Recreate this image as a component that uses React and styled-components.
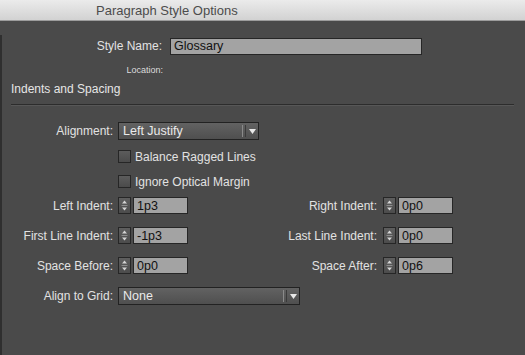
import React from 'react'
import styled, { createGlobalStyle } from 'styled-components'

const Global = createGlobalStyle`
    html, body {
        margin: 0;
        padding: 0;
        background: #4a4a4a;
    }
    body {
        font-family: "Liberation Sans", Arial, sans-serif;
        font-size: 12px;
    }
`

const Dialog = styled.div`
    width: 525px;
    height: 355px;
    display: flex;
    flex-direction: column;
    background: #4a4a4a;
    overflow: hidden;
`

const TitleBar = styled.div`
    height: 20px;
    flex: none;
    display: flex;
    align-items: center;
    padding-left: 96px;
    background: linear-gradient(#ebebeb, #d2d2d2);
    border-bottom: 1px solid #9c9c9c;
    color: #4c4c4c;
    font-size: 13px;
`

const Body = styled.div`
    flex: 1;
    display: flex;
`

// darker edge of the neighbouring panel on the left
const EdgeStrip = styled.div`
    width: 2px;
    margin-top: 14px;
    background: #2f2f2f;
    flex: none;
`

const Content = styled.div`
    flex: 1;
    display: flex;
    flex-direction: column;
    color: #e2e2e2;
`

const NameRow = styled.div`
    display: flex;
    align-items: center;
    gap: 8px;
    margin-top: 17px;
    height: 16px;
`

const NameLabel = styled.div`
    width: 160px;
    text-align: right;
`

const TextField = styled.div`
    box-sizing: border-box;
    width: ${p => p.$width}px;
    height: ${p => p.$height || 17}px;
    background: #a3a3a3;
    border: 1px solid #262626;
    color: #111;
    display: flex;
    align-items: center;
    padding-left: 3px;
    font-size: 12.5px;
`

const Location = styled.div`
    width: 161px;
    text-align: right;
    margin-top: 11px;
    font-size: 9px;
    line-height: 11px;
    color: #dcdcdc;
`

const SectionTitle = styled.div`
    margin: 6px 0 0 9px;
    line-height: 14px;
    color: #e6e6e6;
`

const Separator = styled.div`
    margin: 8px 11px 0 9px;
    border-top: 1px solid #2c2c2c;
    border-bottom: 1px solid #575757;
`

const FieldRow = styled.div`
    display: flex;
    align-items: center;
    gap: 5px;
    margin-top: ${p => p.$top}px;
`

const Label = styled.div`
    width: 111px;
    text-align: right;
    white-space: nowrap;
`

const Select = styled.div`
    box-sizing: border-box;
    width: ${p => p.$width}px;
    height: 18px;
    border: 1px solid #222;
    background: linear-gradient(#626262, #4f4f4f);
    display: flex;
    align-items: center;
    padding-left: 4px;
    color: #eaeaea;
    font-size: 12.5px;
`

const SelectText = styled.span`
    flex: 1;
`

const ArrowPart = styled.div`
    display: flex;
    align-items: center;
    gap: 3px;
    padding-right: 2px;
    height: 100%;
`

const Divider = styled.div`
    width: 2px;
    height: 12px;
    border-left: 1px solid #8a8a8a;
    border-right: 1px solid #3a3a3a;
`

const CheckRow = styled.div`
    display: flex;
    align-items: center;
    gap: 4px;
    margin-left: 116px;
    margin-top: ${p => p.$top}px;
    height: 13px;
`

const Box = styled.div`
    box-sizing: border-box;
    width: 13px;
    height: 13px;
    border: 1px solid #262626;
    background: linear-gradient(#5c5c5c, #4b4b4b);
`

const IndentGrid = styled.div`
    display: grid;
    grid-template-columns: 111px 70px 1fr 70px;
    grid-auto-rows: 17px;
    column-gap: 5px;
    row-gap: 13px;
    align-items: center;
    margin-top: 9px;
    margin-right: 72px;
`

const GridLabel = styled.div`
    text-align: right;
    white-space: nowrap;
    padding-right: ${p => p.$pad || 0}px;
`

const Numeric = styled.div`
    display: flex;
    align-items: center;
    gap: 2px;
`

const Spinner = styled.div`
    box-sizing: border-box;
    width: 13px;
    height: 17px;
    border: 1px solid #262626;
    background: linear-gradient(#5e5e5e, #4c4c4c);
    display: flex;
    flex-direction: column;
    align-items: center;
    justify-content: space-around;
`

function DropArrow() {
    return (
        <svg width="7" height="5" viewBox="0 0 7 5">
            <path d="M0 0 H7 L3.5 5 Z" fill="#e8e8e8" />
        </svg>
    )
}

function SpinnerIcon() {
    return (
        <Spinner>
            <svg width="7" height="15" viewBox="0 0 7 15">
                <path d="M3.5 2.5 L6 5.5 H1 Z" fill="#d4d4d4" />
                <line x1="0.5" y1="7.5" x2="6.5" y2="7.5" stroke="#8c8c8c" strokeWidth="1" />
                <path d="M1 9.5 H6 L3.5 12.5 Z" fill="#d4d4d4" />
            </svg>
        </Spinner>
    )
}

function DropDown({ width, value }) {
    return (
        <Select $width={width}>
            <SelectText>{value}</SelectText>
            <ArrowPart>
                <Divider />
                <DropArrow />
            </ArrowPart>
        </Select>
    )
}

function NumberField({ value }) {
    return (
        <Numeric>
            <SpinnerIcon />
            <TextField $width={55} $height={17}>{value}</TextField>
        </Numeric>
    )
}

const indents = [
    ['Left Indent:', '1p3', 'Right Indent:', '0p0'],
    ['First Line Indent:', '-1p3', 'Last Line Indent:', '0p0'],
    ['Space Before:', '0p0', 'Space After:', '0p6'],
]

export default function App() {
    return (
        <>
            <Global />
            <Dialog>
                <TitleBar>Paragraph Style Options</TitleBar>
                <Body>
                    <EdgeStrip />
                    <Content>
                        <NameRow>
                            <NameLabel>Style Name:</NameLabel>
                            <TextField $width={252} $height={17}>Glossary</TextField>
                        </NameRow>
                        <Location>Location:</Location>
                        <SectionTitle>Indents and Spacing</SectionTitle>
                        <Separator />

                        <FieldRow $top={16}>
                            <Label>Alignment:</Label>
                            <DropDown width={141} value="Left Justify" />
                        </FieldRow>

                        <CheckRow $top={10}>
                            <Box />
                            <span>Balance Ragged Lines</span>
                        </CheckRow>
                        <CheckRow $top={12}>
                            <Box />
                            <span>Ignore Optical Margin</span>
                        </CheckRow>

                        <IndentGrid>
                            {indents.map(([l1, v1, l2, v2]) => (
                                <React.Fragment key={l1}>
                                    <GridLabel>{l1}</GridLabel>
                                    <NumberField value={v1} />
                                    <GridLabel $pad={1}>{l2}</GridLabel>
                                    <NumberField value={v2} />
                                </React.Fragment>
                            ))}
                        </IndentGrid>

                        <FieldRow $top={13}>
                            <Label>Align to Grid:</Label>
                            <DropDown width={182} value="None" />
                        </FieldRow>
                    </Content>
                </Body>
            </Dialog>
        </>
    )
}
